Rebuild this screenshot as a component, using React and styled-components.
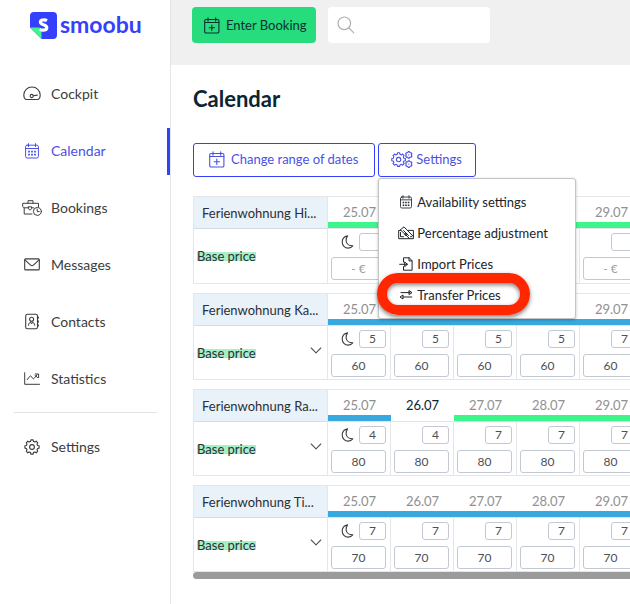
import React from "react";
import styled, { createGlobalStyle, css } from "styled-components";

const GlobalStyle = createGlobalStyle`
  *, *::before, *::after { box-sizing: border-box; }
  body {
    margin: 0;
    background: #fff;
    color: #33363b;
    font-family: Lato, "Open Sans", sans-serif;
    font-size: 13px;
    line-height: 16px;
  }
  button, input { font: inherit; color: inherit; }
  ul { list-style: none; margin: 0; padding: 0; }
`;

/* ---------- icons ---------- */

const Svg = styled.svg`
  display: block;
  flex: none;
  fill: none;
  stroke: currentColor;
  stroke-linecap: round;
  stroke-linejoin: round;
`;

const Icon = ({ w, h, children, stroke = 1 }) => (
  <Svg width={w} height={h} viewBox={`0 0 ${w} ${h}`} strokeWidth={stroke} aria-hidden="true">
    {children}
  </Svg>
);

const gearPath = (cx, cy, outer, inner, teeth) => {
  const step = (Math.PI * 2) / teeth;
  const points = [];
  for (let i = 0; i < teeth; i += 1) {
    const mid = i * step - Math.PI / 2;
    [[-0.32, inner], [-0.2, outer], [0.2, outer], [0.32, inner]].forEach(([t, r]) => {
      const a = mid + t * step;
      points.push(`${(cx + r * Math.cos(a)).toFixed(2)} ${(cy + r * Math.sin(a)).toFixed(2)}`);
    });
  }
  return `M${points.join("L")}Z`;
};

const GaugeIcon = () => (
  <Icon w={18} h={15} stroke={1.1}>
    <path d="M3 13.5C1.4 12.9.8 11 .8 9 .8 4.400 4.500 1 9 1s8.200 3.400 8.200 8c0 2-.6 3.900-2.200 4.500z" />
    <circle cx="8.700" cy="10" r="1.600" />
    <path d="M10.300 9.700l4-.6" />
  </Icon>
);

const CalendarIcon = ({ w = 14, h = 16 }) => (
  <Svg width={w} height={h} viewBox="0 0 14 16" strokeWidth="1" aria-hidden="true">
    <rect x=".6" y="2.200" width="12.800" height="12.800" rx="1.500" />
    <path d="M.6 5.500h12.800M3.500.6v3M10.500.6v3" />
    <path strokeLinecap="butt" strokeWidth="1.800" strokeDasharray="1.800 1.200" d="M3.100 8.700h7.800M3.100 11.700h7.800" />
  </Svg>
);

const CalendarPlusIcon = () => (
  <Icon w={16} h={17} stroke={1.1}>
    <rect x=".7" y="2.500" width="14.200" height="13.500" rx="1.300" />
    <path d="M.7 5.500h14.200M4 .7v3.500M11.700.7v3.500M7.800 8v5.400M5.100 10.700h5.400" />
  </Icon>
);

const BriefcaseIcon = () => (
  <Icon w={20} h={16}>
    <path d="M10 14H2.200V7.800M16.500 6.600V3.300H.7v2.900c0 1 .7 1.600 1.700 1.600h4M9.500 7.800h2M6 3.200V.7h5v2.500" />
    <path d="M6.500 6.800h3v1.700c0 .8-.6 1.200-1.500 1.200s-1.500-.4-1.500-1.200z" />
    <circle cx="15.400" cy="11.400" r="4" />
    <path d="M15.200 9v2.600h2" />
  </Icon>
);

const MailIcon = () => (
  <Icon w={16} h={13} stroke={1.1}>
    <rect x=".7" y=".9" width="14.600" height="11" rx="1" />
    <path d="M.9 1.900L6.600 7.100c.9.8 1.900.8 2.800 0l5.700-5.200" />
  </Icon>
);

const ContactsIcon = () => (
  <Icon w={14} h={17} stroke={1.1}>
    <rect x=".7" y="1.200" width="11.800" height="14.600" rx="1.800" />
    <circle cx="6.600" cy="6.300" r="2" />
    <path d="M3.500 12.300c0-2 1.300-3.200 3.100-3.200s3.100 1.200 3.100 3.200M5.600 9.600l1 1.200 1-1.200" strokeWidth="1" />
    <path d="M13.300 4v1.300M13.300 7.900v1.300M13.300 11.700v1.300" />
  </Icon>
);

const StatisticsIcon = () => (
  <Icon w={16} h={13}>
    <path d="M.7.700v11.600h14.800M3.200 7.700l2.600-3.400c.5-.6 1-.6 1.500.1l1.300 1.900c.5.700 1 .7 1.500.1l2.900-3.600M11.300 2h3.300v3.600M11 3.500l2.600 2" />
  </Icon>
);

const GearIcon = () => (
  <Icon w={16} h={16} stroke={1.100}>
    <path d={gearPath(8, 8, 7.200, 5.800, 8)} />
    <circle cx="8" cy="8" r="2.400" />
  </Icon>
);

const GearsIcon = () => (
  <Icon w={22} h={17} stroke={1.100}>
    <path d={gearPath(7.600, 8.600, 6.900, 5.500, 8)} />
    <circle cx="7.600" cy="8.600" r="2.200" />
    <path d={gearPath(17.800, 3.900, 3.300, 2.700, 6)} />
    <path d={gearPath(17.800, 13.100, 3.300, 2.700, 6)} />
    <path strokeWidth="1.200" d="M17.800 3.900v.1M17.800 13.100v.1" />
  </Icon>
);

const PercentIcon = () => (
  <Icon w={16} h={14}>
    <path d="M2.500 3.700L6 .9l9.300 9.500M10.500 4.400h4.900v8.300H.7V4.400h2" />
    <path d="M2.500 4l8.700 8.200M2.500 6.500v4.200h3M5.500 4.500l5 5M12.500 10.700h1.200" />
    <circle cx="8" cy="8.400" r="1.200" />
  </Icon>
);

const ImportIcon = () => (
  <Icon w={14} h={14}>
    <path d="M4.500 5V.8h5.700l2.900 2.900v9.500H4.500V9.600M10 .9v3h3M.7 7.300h7.600M6 5.200l2.500 2.100L6 9.400z" />
  </Icon>
);

const TransferIcon = () => (
  <Icon w={14} h={10}>
    <path d="M2 2.600h9M10.300.8l2.700 1.800-2.700 1.800zM12.800 7H4M3.700 5.200L1 7l2.700 1.800z" />
  </Icon>
);

const MoonIcon = () => (
  <Icon w={13} h={14} stroke={1.1}>
    <path d="M6.700.9C3.400 1.500 1.200 4 1.200 7.100c0 3.400 2.600 6 6 6 1.900 0 3.500-.8 4.600-2.200C8.300 11 5.400 9 5.100 5.900 4.900 4 5.500 2.200 6.700.9z" />
  </Icon>
);

const ChevronIcon = () => (
  <Icon w={12} h={7} stroke={1.100}>
    <path d="M1.200 1L6 5.800 10.800 1" />
  </Icon>
);

const SearchIcon = () => (
  <Icon w={18} h={18} stroke={1.200}>
    <circle cx="7.300" cy="7.300" r="6.300" />
    <path d="M12 12l4.800 4.800" />
  </Icon>
);

const LogoMark = () => (
  <svg width="27" height="27" viewBox="0 0 27 27" aria-hidden="true">
    <path fill="#3440fb" d="M4 0h19a4 4 0 0 1 4 4v19a4 4 0 0 1-4 4H11.500L0 15.500V4a4 4 0 0 1 4-4z" />
    <path fill="#3df58a" d="M0 15.500h9a2.500 2.500 0 0 1 2.500 2.500v9z" />
    <path
      fill="none"
      stroke="#fff"
      strokeWidth="3.200"
      d="M17 8.600c-1.100-.6-2.300-.9-3.500-.8-2 .1-3.200 1-3.100 2.400.2 3.300 6.300 1.700 6.400 5.300 0 1.700-1.400 2.700-3.600 2.700-1.100 0-2.200-.2-3.400-.8"
    />
  </svg>
);

/* ---------- layout ---------- */

const Page = styled.div`
  display: grid;
  grid-template-columns: 171px minmax(0, 1fr);
  min-height: 100vh;
`;

const Sidebar = styled.aside`
  border-right: 1px solid #e4e4e4;
  padding-top: 12px;
`;

const Brand = styled.a`
  display: flex;
  align-items: center;
  gap: 3px;
  height: 27px;
  margin: 0 0 32px 30px;
  color: #3440fb;
  font-size: 23px;
  font-weight: 700;
  line-height: 24px;
  text-decoration: none;
`;

const BrandName = styled.span`
  padding-bottom: 4px;
`;

const NavList = styled.ul`
  display: flex;
  flex-direction: column;
  gap: 10px;
`;

const NavLink = styled.a`
  display: flex;
  align-items: center;
  gap: 9px;
  height: 47px;
  padding: 0 0 2px 22px;
  color: ${(p) => (p.$active ? "#4a51e6" : "#3c3d40")};
  border-right: 3px solid ${(p) => (p.$active ? "#3440fb" : "transparent")};
  font-size: 14px;
  text-decoration: none;
`;

const NavIcon = styled.span`
  display: flex;
  justify-content: center;
  width: 20px;
`;

const Divider = styled.hr`
  height: 1px;
  margin: 9px 13px 11px 14px;
  border: 0;
  background: #e2e2e2;
`;

const TopBar = styled.header`
  display: flex;
  gap: 12px;
  height: 65px;
  padding: 7px 21px;
  background: #f0f0f0;
`;

const PrimaryButton = styled.button`
  display: flex;
  align-items: center;
  gap: 6px;
  height: 36px;
  padding: 0 9px 0 12px;
  border: 0;
  border-radius: 4px;
  background: #26dc7c;
  color: #0b3036;
  font-size: 13px;
  white-space: nowrap;
`;

const SearchBox = styled.label`
  display: flex;
  align-items: center;
  gap: 8px;
  flex: 0 1 162px;
  min-width: 0;
  height: 36px;
  padding: 0 9px;
  border-radius: 4px;
  background: #fff;
  color: #b0b0b0;
`;

const SearchInput = styled.input`
  flex: 1;
  min-width: 0;
  border: 0;
  outline: 0;
  background: transparent;
  color: #33363b;
`;

const Content = styled.main`
  padding: 22px 0 24px 22px;
`;

const Title = styled.h1`
  margin: 0 0 32px;
  color: #0a2533;
  font-size: 22px;
  font-weight: 700;
  line-height: 24px;
`;

const Toolbar = styled.div`
  display: flex;
  gap: 3px;
  margin-bottom: 19px;
`;

const OutlineButton = styled.button`
  display: flex;
  align-items: center;
  gap: ${(p) => (p.$compact ? "3px" : "6px")};
  height: 34px;
  padding: ${(p) => (p.$compact ? "0 13px 2px 12px" : "0 16px 2px 15px")};
  border: 1px solid #3440fb;
  border-radius: 3px;
  background: #fff;
  color: #4a51e6;
  font-size: 13px;
  white-space: nowrap;
`;

const MenuAnchor = styled.div`
  position: relative;
`;

const Menu = styled.ul`
  position: absolute;
  z-index: 2;
  top: 100%;
  left: 0;
  width: 198px;
  margin-top: 1px;
  padding: 7px 0 8px;
  border: 1px solid #c4c4c4;
  border-radius: 3px;
  background: #fff;
  box-shadow: 0 1px 3px rgba(0, 0, 0, 0.25);
`;

const MenuItem = styled.li`
  position: relative;
`;

const MenuButton = styled.button`
  display: flex;
  align-items: center;
  gap: 3px;
  width: 100%;
  height: 31px;
  padding: 0 0 0 19px;
  border: 0;
  background: transparent;
  color: #212529;
  font-size: 13px;
  text-align: left;
  white-space: nowrap;
`;

const MenuIcon = styled.span`
  display: flex;
  justify-content: center;
  width: 16px;
`;

const HighlightRing = styled.span`
  position: absolute;
  top: -6px;
  left: -2px;
  width: 153px;
  height: 42px;
  border: 10px solid #ff2600;
  border-radius: 21px;
  box-shadow: 0 2px 4px rgba(0, 0, 0, 0.5), inset 0 2px 4px rgba(0, 0, 0, 0.5);
  pointer-events: none;
`;

const Calendars = styled.div`
  display: flex;
  flex-direction: column;
  gap: 9px;
  overflow: hidden;
`;

const PriceTable = styled.table`
  width: 450px;
  table-layout: fixed;
  border-spacing: 0;
  border-top: 1px solid #e4e6e8;
  border-left: 1px solid #e4e6e8;
`;

const LabelColumn = styled.col`
  width: 134px;
`;

const cell = css`
  padding: 0;
  border-right: 1px solid #e4e6e8;
  border-bottom: 1px solid #e4e6e8;
`;

const NameHead = styled.th`
  ${cell}
  height: 32px;
  padding-left: 8px;
  border-bottom-color: #d3dde5;
  background: #e9f1f9;
  color: #2b2f38;
  font-size: 13px;
  font-weight: 400;
  text-align: left;
  white-space: nowrap;
`;

const barColors = { free: "#3df58a", booked: "#37a9df", none: "#fff" };

const DayHead = styled.th`
  padding: 0 0 2px;
  border-bottom: 1px solid #dfe5e8;
  box-shadow: inset 0 -6px ${(p) => barColors[p.$bar]};
  color: ${(p) => (p.$today ? "#0a2533" : "#8f9092")};
  font-size: 13px;
  font-weight: 400;
  text-align: center;
`;

const LabelCell = styled.th`
  ${cell}
  height: ${(p) => (p.$roomy ? "55px" : "54px")};
  font-weight: 400;
  text-align: left;
`;

const LabelRow = styled.div`
  display: flex;
  align-items: center;
  justify-content: space-between;
  padding: 0 5px 0 3px;
`;

const Mark = styled.mark`
  background: linear-gradient(#a6f0c6, #a6f0c6) 0 4px / 100% 9px no-repeat;
  color: #2b2f38;
  font-size: 13px;
`;

const ExpandButton = styled.button`
  display: flex;
  margin-bottom: 4px;
  padding: 0;
  border: 0;
  background: transparent;
  color: #55585c;
`;

const DayCell = styled.td`
  ${cell}
  vertical-align: top;
`;

const DayBody = styled.div`
  display: flex;
  flex-direction: column;
  gap: 6px;
  padding: 4px 4px 0 3px;
`;

const NightsRow = styled.label`
  display: flex;
  align-items: center;
  justify-content: flex-end;
  gap: 5px;
  color: #3c3d40;
`;

const NumberInput = styled.input`
  display: block;
  width: ${(p) => (p.$small ? "27px" : "100%")};
  height: ${(p) => (p.$small ? "18px" : "23px")};
  padding: 0 0 1px;
  border: 1px solid #c3c9d2;
  border-radius: 3px;
  background: #fff;
  color: #4b5056;
  font-size: 12px;
  text-align: center;

  &::placeholder { color: #a0a0a0; opacity: 1; }
`;

const ScrollTrack = styled.div`
  height: 7px;
  border-radius: 4px 0 0 4px;
  background: #9b9b9b;
`;

/* ---------- data ---------- */

const navItems = [
  ["Cockpit", GaugeIcon],
  ["Calendar", CalendarIcon],
  ["Bookings", BriefcaseIcon],
  ["Messages", MailIcon],
  ["Contacts", ContactsIcon],
  ["Statistics", StatisticsIcon],
];

const menuItems = [
  ["Availability settings", () => <CalendarIcon w={12} h={14} />],
  ["Percentage adjustment", PercentIcon],
  ["Import Prices", ImportIcon],
  ["Transfer Prices", TransferIcon],
];

const days = ["25.07", "26.07", "27.07", "28.07", "29.07"];
const all = (value) => days.map(() => value);

const rentals = [
  { name: "Ferienwohnung Hi...", bars: all("free"), nights: all(""), price: "", roomy: true },
  { name: "Ferienwohnung Ka...", bars: all("booked"), nights: [5, 5, 5, 5, 7], price: "60" },
  {
    name: "Ferienwohnung Ra...",
    bars: ["booked", "none", "free", "free", "free"],
    nights: [4, 4, 7, 7, 7],
    price: "80",
    today: 1,
  },
  { name: "Ferienwohnung Ti...", bars: all("booked"), nights: all(7), price: "70" },
];

const NavItem = ({ label, icon: Glyph, active }) => (
  <NavLink href="#" $active={active} aria-current={active ? "page" : undefined}>
    <NavIcon><Glyph /></NavIcon>
    {label}
  </NavLink>
);

const Rental = ({ name, bars, nights, price, today, roomy }) => (
  <PriceTable>
    <colgroup>
      <LabelColumn />
      {days.map((d) => <col key={d} />)}
    </colgroup>
    <thead>
      <tr>
        <NameHead scope="col">{name}</NameHead>
        {days.map((d, i) => (
          <DayHead key={d} scope="col" $bar={bars[i]} $today={today === i}>{d}</DayHead>
        ))}
      </tr>
    </thead>
    <tbody>
      <tr>
        <LabelCell scope="row" $roomy={roomy}>
          <LabelRow>
            <Mark>Base price</Mark>
            {price && <ExpandButton aria-label={`Expand ${name}`}><ChevronIcon /></ExpandButton>}
          </LabelRow>
        </LabelCell>
        {days.map((d, i) => (
          <DayCell key={d}>
            <DayBody>
              <NightsRow>
                {i === 0 && <MoonIcon />}
                <NumberInput $small defaultValue={nights[i]} aria-label={`Minimum nights ${d}`} />
              </NightsRow>
              <NumberInput defaultValue={price} placeholder="- €" aria-label={`Price ${d}`} />
            </DayBody>
          </DayCell>
        ))}
      </tr>
    </tbody>
  </PriceTable>
);

export default function App() {
  return (
    <Page>
      <GlobalStyle />
      <Sidebar>
        <Brand href="#"><LogoMark /><BrandName>smoobu</BrandName></Brand>
        <nav>
          <NavList>
            {navItems.map(([label, icon]) => (
              <li key={label}><NavItem label={label} icon={icon} active={label === "Calendar"} /></li>
            ))}
          </NavList>
          <Divider />
          <NavItem label="Settings" icon={GearIcon} />
        </nav>
      </Sidebar>
      <div>
        <TopBar>
          <PrimaryButton><CalendarPlusIcon />Enter Booking</PrimaryButton>
          <SearchBox>
            <SearchIcon />
            <SearchInput type="search" aria-label="Search" />
          </SearchBox>
        </TopBar>
        <Content>
          <Title>Calendar</Title>
          <Toolbar>
            <OutlineButton><CalendarPlusIcon />Change range of dates</OutlineButton>
            <MenuAnchor>
              <OutlineButton $compact aria-expanded="true"><GearsIcon />Settings</OutlineButton>
              <Menu>
                {menuItems.map(([label, Glyph]) => (
                  <MenuItem key={label}>
                    <MenuButton><MenuIcon><Glyph /></MenuIcon>{label}</MenuButton>
                    {label === "Transfer Prices" && <HighlightRing />}
                  </MenuItem>
                ))}
              </Menu>
            </MenuAnchor>
          </Toolbar>
          <Calendars>
            {rentals.map((r) => <Rental key={r.name} {...r} />)}
          </Calendars>
          <ScrollTrack />
        </Content>
      </div>
    </Page>
  );
}
